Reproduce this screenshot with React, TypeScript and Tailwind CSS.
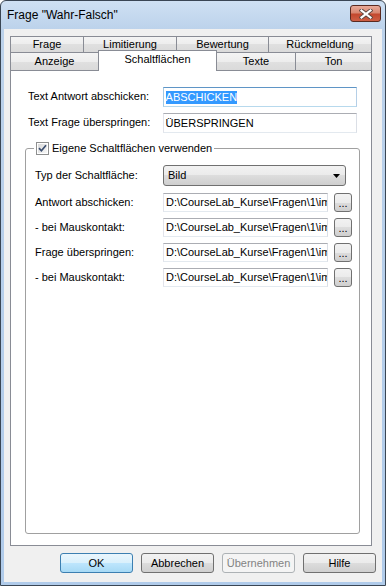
import React from "react";

const btnGrad =
  "bg-[linear-gradient(to_bottom,#f2f2f2_0%,#ebebeb_50%,#dddddd_50%,#cfcfcf_100%)]";
const tabGrad =
  "bg-[linear-gradient(to_bottom,#f4f4f4_0%,#ededed_50%,#e0e0e0_50%,#dadada_100%)]";

function CloseButton() {
  return (
    <div className="w-[31px] h-[17px] rounded-[3px] border border-[#5a2a20] bg-[linear-gradient(to_bottom,#e8aa99_0%,#d88771_45%,#c3482e_55%,#cd5f45_100%)] flex items-center justify-center">
      <svg width="14" height="10" viewBox="0 0 14 10">
        <path d="M2.5 1.5 L11.5 8.5 M11.5 1.5 L2.5 8.5" stroke="#5b4640" strokeWidth="4" strokeLinecap="square" fill="none" />
        <path d="M2.5 1.5 L11.5 8.5 M11.5 1.5 L2.5 8.5" stroke="#ffffff" strokeWidth="2.2" strokeLinecap="square" fill="none" />
      </svg>
    </div>
  );
}

function Checkbox() {
  return (
    <div className="w-[13px] h-[13px] border border-[#8e8f8f] bg-white p-px shrink-0">
      <div className="w-full h-full bg-[linear-gradient(135deg,#d9d9d9,#f7f7f7)] flex items-center justify-center">
        <svg width="9" height="9" viewBox="0 0 9 9" className="overflow-visible">
          <path d="M1 4.2 L3.4 6.8 L8 1.2" stroke="#3c4f70" strokeWidth="1.7" fill="none" />
        </svg>
      </div>
    </div>
  );
}

function FileRow({ label }: { label: string }) {
  return (
    <div className="flex items-center h-[19px]">
      <span className="w-[128px] leading-[13px]">{label}</span>
      <div className="w-[165px] h-[19px] border border-[#e2e3ea] border-t-[#abadb3] border-r-[#dbdfe6] border-b-[#e3e9ef] bg-white pl-[2px] overflow-hidden whitespace-nowrap flex items-center leading-[13px]">
        {"D:\\CourseLab_Kurse\\Fragen\\1\\im"}
      </div>
      <div className={`ml-[6px] w-[18px] h-[19px] rounded-[3px] border border-[#707070] ${btnGrad} flex items-center justify-center leading-[13px] pt-[1px]`}>
        ...
      </div>
    </div>
  );
}

function DlgButton({ label, kind }: { label: string; kind?: "default" | "disabled" }) {
  if (kind === "default") {
    return (
      <div className="w-[73px] h-[20px] rounded-[3px] border border-[#3c7fb1] bg-[linear-gradient(to_bottom,#eaf6fd_0%,#d9f0fc_50%,#bee6fd_50%,#a7d9f5_100%)] flex items-center justify-center">
        {label}
      </div>
    );
  }
  if (kind === "disabled") {
    return (
      <div className="w-[73px] h-[20px] rounded-[3px] border border-[#adb2b5] bg-[#f4f4f4] text-[#838383] flex items-center justify-center">
        {label}
      </div>
    );
  }
  return (
    <div className={`w-[73px] h-[20px] rounded-[3px] border border-[#707070] ${btnGrad} flex items-center justify-center`}>
      {label}
    </div>
  );
}

export default function App() {
  return (
    <div className="w-[386px] h-[586px] font-['Liberation_Sans',Arial,sans-serif] text-[11px] text-black">
      <div className="w-full h-full flex flex-col border border-[#3a4654] rounded-t-[6px] overflow-hidden bg-[linear-gradient(to_bottom,#cfe0f3_0px,#bcd2eb_28px,#b0cbea_100%)]">
        {/* title bar */}
        <div className="h-[28px] shrink-0 flex items-start justify-between pl-[6px] pr-[4px] pt-[4px]">
          <span className="text-[12px] leading-[18px] pt-px">{'Frage "Wahr-Falsch"'}</span>
          <CloseButton />
        </div>
        {/* frame + client */}
        <div className="flex-1 flex px-[3px] pb-[3px]">
          <div className="flex-1 flex flex-col bg-[#f0f0f0] pt-[7px]">
            {/* tab control */}
            <div className="ml-[6px] w-[362px] flex flex-col">
              <div className="flex h-[16px]">
                <div className={`w-[73px] border-l border-t border-[#898c95] ${tabGrad} flex justify-center leading-[15px]`}>Frage</div>
                <div className={`w-[93px] border-l border-t border-[#898c95] ${tabGrad} flex justify-center leading-[15px]`}>Limitierung</div>
                <div className={`w-[92px] border-l border-t border-[#898c95] ${tabGrad} flex justify-center leading-[15px]`}>Bewertung</div>
                <div className={`w-[104px] border-l border-t border-r border-[#898c95] ${tabGrad} flex justify-center leading-[15px]`}>Rückmeldung</div>
              </div>
              <div className="flex items-end h-[18px]">
                <div className={`w-[88px] h-[18px] border-l border-t border-[#898c95] ${tabGrad} flex justify-center leading-[17px]`}>Anzeige</div>
                <div className="relative z-10 w-[119px] h-[21px] -mb-px border-l border-t border-r border-[#898c95] bg-white flex justify-center leading-[17px]">Schaltflächen</div>
                <div className={`w-[78px] h-[18px] border-t border-[#898c95] ${tabGrad} flex justify-center leading-[17px]`}>Texte</div>
                <div className={`w-[77px] h-[18px] border-l border-t border-r border-[#898c95] ${tabGrad} flex justify-center leading-[17px]`}>Ton</div>
              </div>
              {/* panel */}
              <div className="h-[476px] border border-[#898c95] bg-white pt-[16px] px-[14px] flex flex-col">
                <div className="flex items-center pl-[3px] h-[20px]">
                  <span className="w-[135px] leading-[13px] -mt-[2px]">Text Antwort abschicken:</span>
                  <div className="w-[195px] h-[20px] border border-[#a4c9e3] border-t-[#5f95c6] border-r-[#b5cfe7] border-b-[#b7d9ed] bg-white pl-[2px] flex items-center">
                    <span className="bg-[#3399ff] text-white leading-[13px]">ABSCHICKEN</span>
                  </div>
                </div>
                <div className="flex items-center pl-[3px] h-[20px] mt-[6px]">
                  <span className="w-[135px] leading-[13px] -mt-[2px]">Text Frage überspringen:</span>
                  <div className="w-[195px] h-[20px] border border-[#e2e3ea] border-t-[#abadb3] border-r-[#dbdfe6] border-b-[#e3e9ef] bg-white pl-[2px] flex items-center leading-[13px]">
                    ÜBERSPRINGEN
                  </div>
                </div>
                {/* group box */}
                <div className="relative mt-[15px] w-[335px] h-[386px] border border-[#a0a0a0] rounded-[3px] pt-[16px] pl-[9px]">
                  <div className="absolute -top-[7px] left-[8px] h-[13px] flex items-center bg-white px-[2px]">
                    <Checkbox />
                    <span className="ml-[3px] leading-[13px]">Eigene Schaltflächen verwenden</span>
                  </div>
                  <div className="flex items-center h-[21px]">
                    <span className="w-[128px] leading-[13px]">Typ der Schaltfläche:</span>
                    <div className={`w-[183px] h-[21px] rounded-[3px] border border-[#707070] ${btnGrad} flex items-center justify-between pl-[4px] pr-[5px] leading-[13px]`}>
                      <span>Bild</span>
                      <svg width="7" height="4" viewBox="0 0 7 4">
                        <polygon points="0,0 7,0 3.5,4" fill="#000" />
                      </svg>
                    </div>
                  </div>
                  <div className="mt-[7px] flex flex-col gap-[6px]">
                    <FileRow label="Antwort abschicken:" />
                    <FileRow label="- bei Mauskontakt:" />
                    <FileRow label="Frage überspringen:" />
                    <FileRow label="- bei Mauskontakt:" />
                  </div>
                </div>
              </div>
            </div>
            {/* buttons */}
            <div className="mt-[7px] flex justify-end gap-[8px] pr-[6px]">
              <DlgButton label="OK" kind="default" />
              <DlgButton label="Abbrechen" />
              <DlgButton label="Übernehmen" kind="disabled" />
              <DlgButton label="Hilfe" />
            </div>
          </div>
        </div>
      </div>
    </div>
  );
}
